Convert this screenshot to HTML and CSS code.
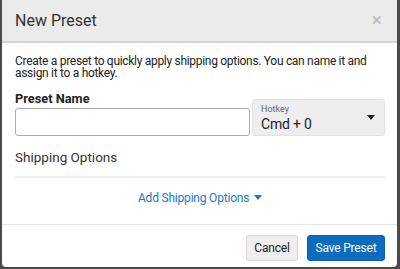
FILE: index.html
```html
<html>
    <head>
        <link rel="stylesheet" href="styles.css">
    </head>
    <body>
        <div class="modal">
            <div class="modal-header">
                <span class="modal-title">New Preset</span>
                <span class="close">&times;</span>
            </div>
            <div class="modal-body">
                <p class="desc">Create a preset to quickly apply shipping options. You can name it and assign it to a hotkey.</p>
                <div class="fields">
                    <div class="name-field">
                        <label for="preset-name">Preset Name</label>
                        <input type="text" id="preset-name">
                    </div>
                    <div class="hotkey">
                        <span class="hotkey-label">Hotkey</span>
                        <span class="hotkey-value">Cmd + 0</span>
                        <span class="caret"></span>
                    </div>
                </div>
                <div class="section-title">Shipping Options</div>
                <div class="divider"></div>
                <div class="add-link">Add Shipping Options <span class="caret blue"></span></div>
            </div>
            <div class="modal-footer">
                <button class="btn cancel">Cancel</button>
                <button class="btn save">Save Preset</button>
            </div>
        </div>
    </body>
</html>
```

FILE: styles.css
```css
body{
    margin:0;
    background-color:#4a4a4a;
    font-family:Roboto, "Liberation Sans", sans-serif;
    color:#222;
}
.modal{
    margin:0 3px 0 2px;
    height:267px;
    background-color:white;
    border-radius:0 0 4px 4px;
    overflow:hidden;
}
.modal-header{
    height:41px;
    background-color:#ebebeb;
    border-bottom:2px solid #d4d4d4;
    display:flex;
    align-items:center;
    justify-content:space-between;
    padding:0 13px;
}
.modal-title{
    font-size:16px;
    color:#333;
    margin-top:-1px;
}
.close{
    font-size:19px;
    color:#bbb;
    margin-top:-2px;
    margin-right:2px;
}
.modal-body{
    padding:12px 12px 18px 13px;
}
.desc{
    margin:0;
    font-size:12px;
    letter-spacing:-0.3px;
    line-height:12px;
    margin-right:-4px;
}
.fields{
    display:flex;
    align-items:flex-end;
    gap:2px;
    margin-top:12px;
}
.name-field{
    flex:1;
    display:flex;
    flex-direction:column;
}
.name-field label{
    font-size:12.8px;
    font-weight:bold;
    line-height:15px;
    margin-bottom:2px;
}
.name-field input{
    height:28px;
    border:1px solid #aaa;
    border-radius:3px;
    padding:0 6px;
    box-sizing:border-box;
}
.hotkey{
    width:133px;
    height:37px;
    box-sizing:border-box;
    background-color:#eee;
    border:1px solid #e2e2e2;
    border-radius:3px;
    position:relative;
    padding:4px 8px;
    display:flex;
    flex-direction:column;
}
.hotkey-label{
    font-size:9px;
    line-height:11px;
    color:#666;
}
.hotkey-value{
    font-size:14px;
    letter-spacing:-0.2px;
    line-height:18px;
    color:#222;
}
.caret{
    display:inline-block;
    width:0;
    height:0;
    border-left:4px solid transparent;
    border-right:4px solid transparent;
    border-top:5px solid #222;
}
.hotkey .caret{
    position:absolute;
    right:9px;
    top:15px;
}
.section-title{
    margin-top:13px;
    font-size:13.5px;
    line-height:16px;
    color:#333;
}
.divider{
    margin-top:11px;
    height:2px;
    background-color:#eee;
}
.add-link{
    margin-top:13px;
    text-align:center;
    font-size:12px;
    letter-spacing:-0.2px;
    line-height:15px;
    color:#1f78c9;
}
.caret.blue{
    border-top-color:#1f78c9;
    vertical-align:2px;
    margin-left:2px;
}
.modal-footer{
    border-top:1px solid #e5e5e5;
    padding:10px 12px 0 0;
    display:flex;
    justify-content:flex-end;
    gap:9px;
}
.btn{
    height:26px;
    font-family:Roboto, "Liberation Sans", sans-serif;
    font-size:12px;
    letter-spacing:-0.2px;
    border-radius:3px;
    padding:0;
}
.cancel{
    width:52px;
    background-color:#eee;
    border:1px solid #d6d6d6;
    color:#222;
}
.save{
    width:78px;
    background-color:#0b6cc0;
    border:1px solid #0a62ae;
    color:white;
}
```
